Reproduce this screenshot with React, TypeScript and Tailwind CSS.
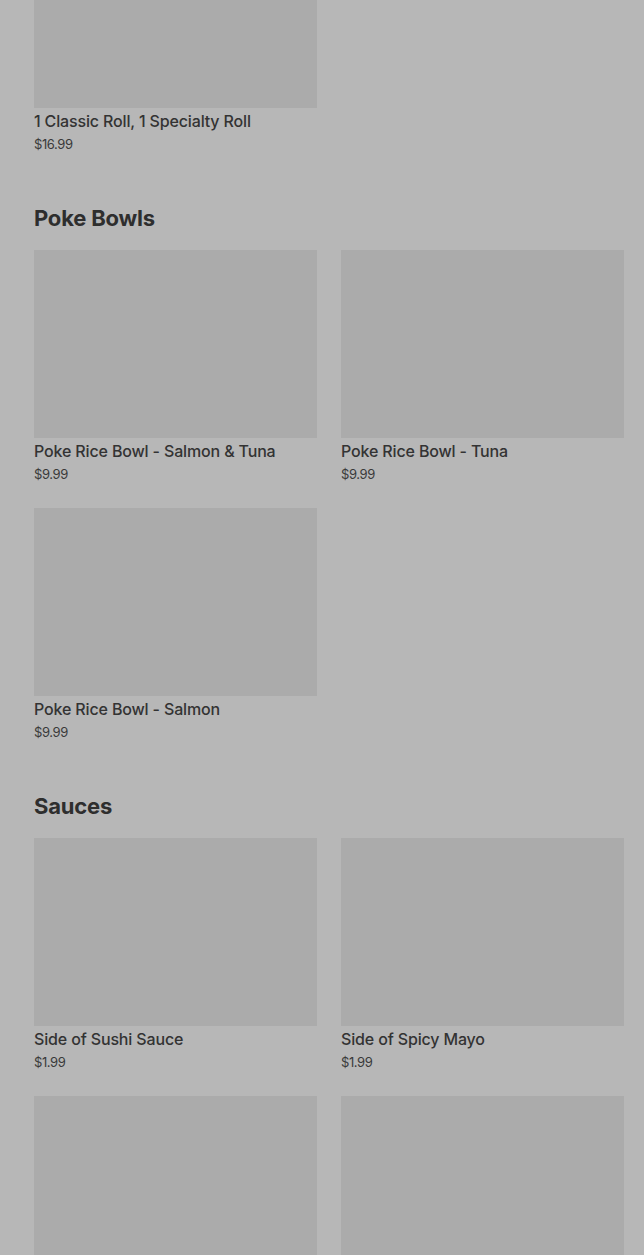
import React from "react";

type Item = { name: string; price: string };

const sections: { title?: string; items: Item[] }[] = [
  { items: [{ name: "1 Classic Roll, 1 Specialty Roll", price: "$16.99" }] },
  {
    title: "Poke Bowls",
    items: [
      { name: "Poke Rice Bowl - Salmon & Tuna", price: "$9.99" },
      { name: "Poke Rice Bowl - Tuna", price: "$9.99" },
      { name: "Poke Rice Bowl - Salmon", price: "$9.99" },
    ],
  },
  {
    title: "Sauces",
    items: [
      { name: "Side of Sushi Sauce", price: "$1.99" },
      { name: "Side of Spicy Mayo", price: "$1.99" },
      { name: "Side of Eel Sauce", price: "$1.99" },
      { name: "Side of Ponzu", price: "$1.99" },
    ],
  },
];

function ItemCard({ item }: { item: Item }) {
  return (
    <div className="flex flex-col">
      <div className="h-[188px] w-full bg-[#ababab]" />
      <p className="mt-[3px] text-[16px] font-medium leading-[20px] tracking-[-0.15px] text-[#333333]">
        {item.name}
      </p>
      <p className="mt-[4px] text-[13px] leading-[18px] tracking-[-0.4px] text-[#3a3a3a]">{item.price}</p>
    </div>
  );
}

export default function App() {
  return (
    <div
      className="min-h-screen overflow-x-hidden bg-[#b7b7b7] pb-10"
      style={{ fontFamily: "Inter, Roboto, 'Liberation Sans', sans-serif" }}
    >
      <div className="-mt-[80px] flex flex-col pl-[34px] pr-[20px]">
        {sections.map((section, i) => (
          <section key={i} className={i === 0 ? "" : "mt-[51px]"}>
            {section.title && (
              <h2 className="mb-[18px] text-[22px] font-bold leading-[28px] tracking-[-0.2px] text-[#2e2e2e]">
                {section.title}
              </h2>
            )}
            <div className="grid grid-cols-2 gap-x-[24px] gap-y-[25px]">
              {section.items.map((item) => (
                <ItemCard key={item.name} item={item} />
              ))}
            </div>
          </section>
        ))}
      </div>
    </div>
  );
}
